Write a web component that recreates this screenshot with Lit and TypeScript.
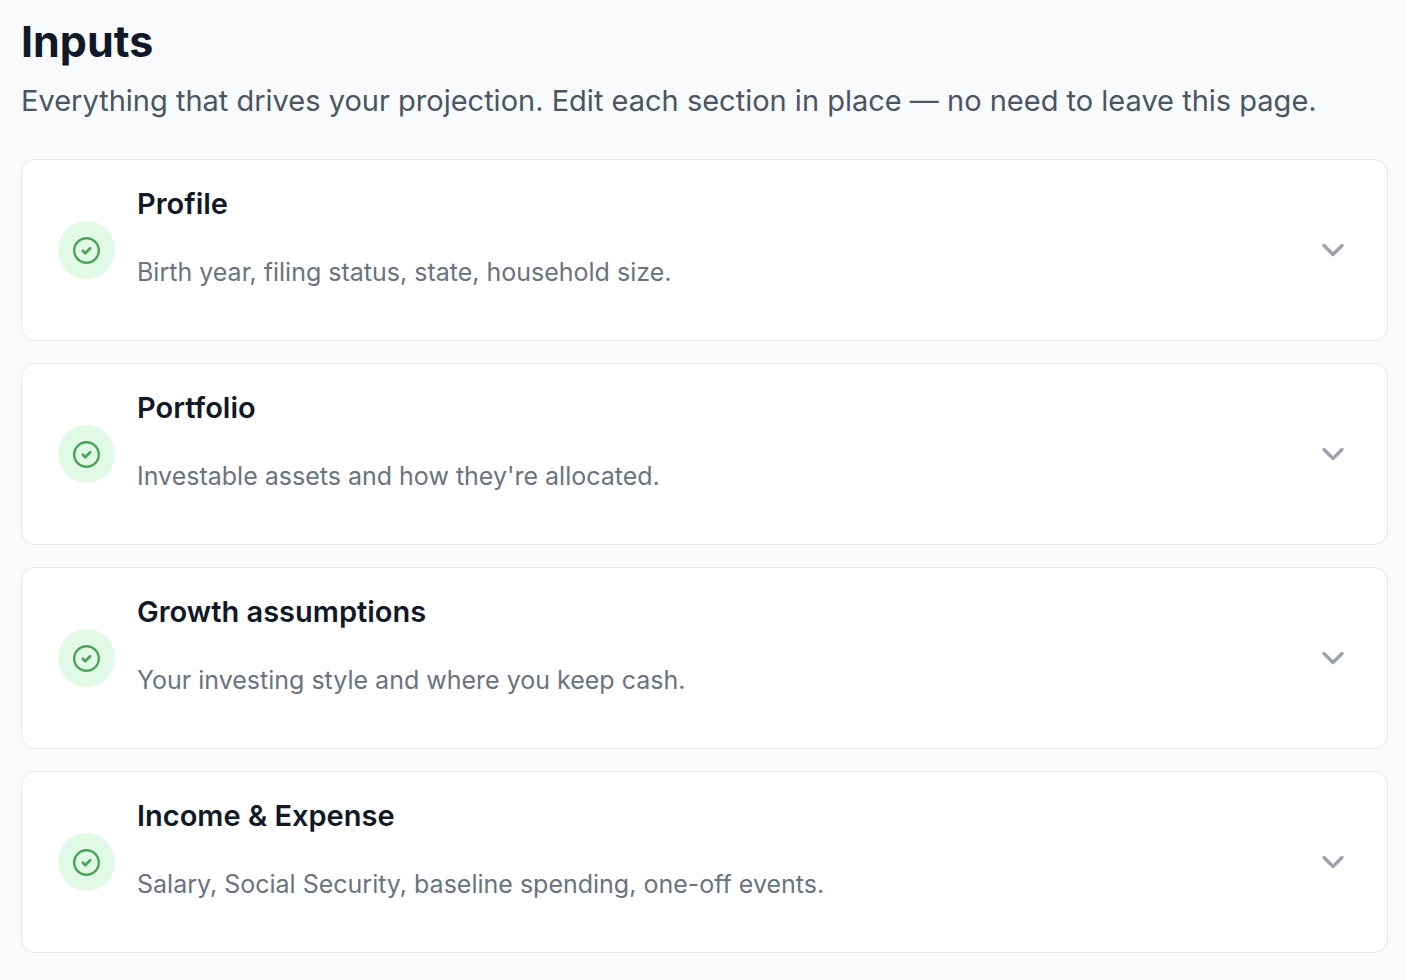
import { LitElement, html, css } from "lit";
import { customElement, property } from "lit/decorators.js";

interface Section {
  title: string;
  description: string;
}

const sections: Section[] = [
  { title: "Profile", description: "Birth year, filing status, state, household size." },
  { title: "Portfolio", description: "Investable assets and how they're allocated." },
  { title: "Growth assumptions", description: "Your investing style and where you keep cash." },
  { title: "Income & Expense", description: "Salary, Social Security, baseline spending, one-off events." },
];

@customElement("input-section")
export class InputSection extends LitElement {
  @property() heading = "";
  @property() description = "";

  static styles = css`
    :host {
      display: block;
    }
    .card {
      box-sizing: border-box;
      display: flex;
      align-items: center;
      gap: 22px;
      width: 100%;
      margin: 0;
      padding: 22px 36px;
      border: 1px solid #e5e7eb;
      border-radius: 14px;
      background: #ffffff;
      font-family: inherit;
      text-align: left;
      cursor: pointer;
    }
    .badge {
      display: flex;
      align-items: center;
      justify-content: center;
      flex: none;
      width: 57px;
      height: 58px;
      border-radius: 50%;
      background: #e1fae7;
      color: #4da357;
    }
    .text {
      flex: 1;
      min-width: 0;
      padding-bottom: 24px;
    }
    .title,
    .description {
      display: block;
    }
    .title {
      margin-bottom: 26px;
      color: #111827;
      font-size: 29px;
      font-weight: 600;
      line-height: 43px;
    }
    .description {
      color: #6b7280;
      font-size: 25px;
      line-height: 43px;
    }
    .chevron {
      flex: none;
      color: #9ca3af;
    }
  `;

  render() {
    return html`
      <button class="card" type="button" aria-expanded="false">
        <span class="badge">
          <svg width="29" height="29" viewBox="0 0 24 24" fill="none" stroke="currentColor" stroke-width="2" stroke-linecap="round" stroke-linejoin="round" aria-hidden="true">
            <circle cx="12" cy="12" r="10.2" />
            <path d="m9 12.2 2 2 4-4" stroke-width="2.3" />
          </svg>
        </span>
        <span class="text">
          <span class="title">${this.heading}</span>
          <span class="description">${this.description}</span>
        </span>
        <svg class="chevron" width="36" height="36" viewBox="0 0 24 24" fill="none" stroke="currentColor" stroke-width="2.3" stroke-linecap="round" stroke-linejoin="round" aria-hidden="true">
          <path d="m6 9 6 6 6-6" />
        </svg>
      </button>
    `;
  }
}

@customElement("app-root")
export class AppRoot extends LitElement {
  static styles = css`
    :host {
      display: block;
      box-sizing: border-box;
      min-height: 100vh;
      padding: 13px 18px 27px 21px;
      background: #f9fafc;
      font-family: Inter, "Liberation Sans", sans-serif;
    }
    .heading {
      margin: 0;
      color: #111827;
      font-size: 43px;
      font-weight: 700;
      line-height: 57px;
    }
    .lead {
      margin: 9px 0 36px;
      color: #4b5563;
      font-size: 29px;
      line-height: 44px;
    }
    .sections {
      display: grid;
      gap: 22px;
    }
  `;

  render() {
    return html`
      <main>
        <h1 class="heading">Inputs</h1>
        <p class="lead">Everything that drives your projection. Edit each section in place — no need to leave this page.</p>
        <div class="sections">
          ${sections.map(
            (s) => html`<input-section .heading=${s.title} .description=${s.description}></input-section>`,
          )}
        </div>
      </main>
    `;
  }
}
